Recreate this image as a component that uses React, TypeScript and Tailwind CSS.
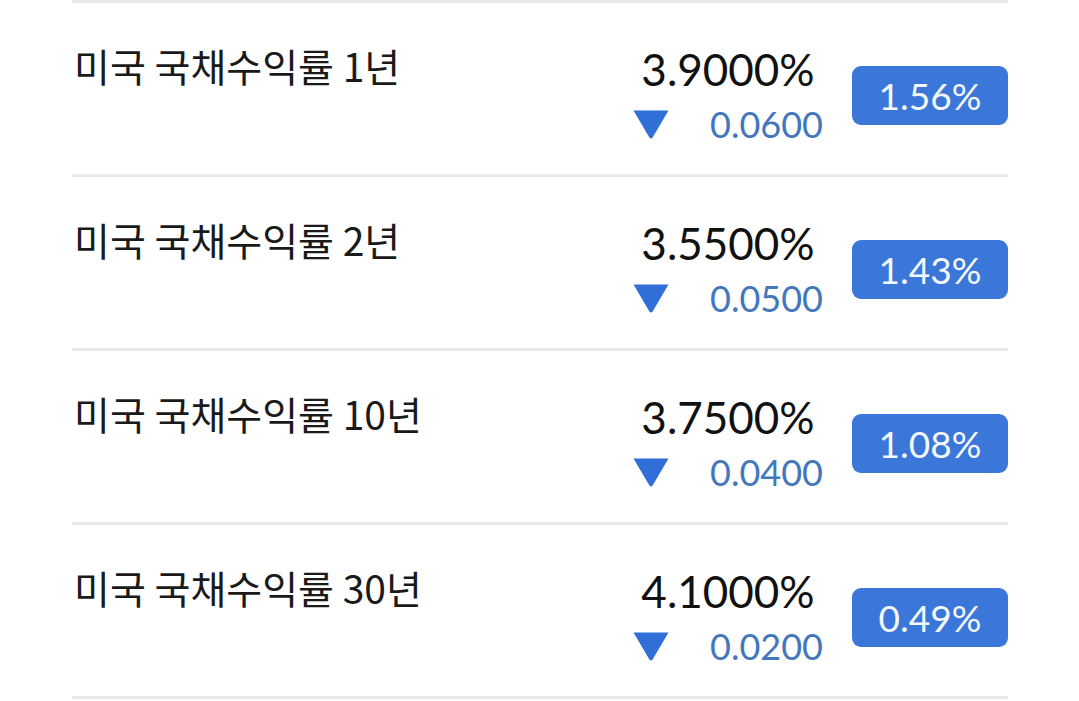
const rows = [
  { term: '1년', rate: '3.9000%', diff: '0.0600', pct: '1.56%' },
  { term: '2년', rate: '3.5500%', diff: '0.0500', pct: '1.43%' },
  { term: '10년', rate: '3.7500%', diff: '0.0400', pct: '1.08%' },
  { term: '30년', rate: '4.1000%', diff: '0.0200', pct: '0.49%' },
];

const DownTriangle = () => (
  <svg width="36" height="29" viewBox="0 0 36 29" className="mt-[4px] shrink-0">
    <path d="M0.5 0.5 H35.5 L19.6 27.6 Q18 29.5 16.4 27.6 Z" fill="#2f6fd7" />
  </svg>
);

const App = () => {
  return (
    <div className="min-h-[701px] w-full bg-white">
      <div className="ml-[72px] w-[936px] border-b-[3px] border-[#e9e9e9]">
        {rows.map((row) => (
          <div
            key={row.term}
            className="flex h-[174px] border-t-[3px] border-[#e9e9e9]"
          >
            <div
              className="flex-1 pt-[38px] pl-[2px] text-[39px] leading-[48px] text-[#1a1a1a]"
              style={{ fontFamily: '"Noto Sans CJK KR", sans-serif' }}
            >
              미국 국채수익률 {row.term}
            </div>
            <div
              className="flex items-start gap-[29px]"
              style={{ fontFamily: 'Lato, sans-serif' }}
            >
              <div className="flex w-[190px] flex-col items-center pt-[44px]">
                <div className="text-[44px] leading-[44px] text-[#111111]">{row.rate}</div>
                <div className="mt-[15px] flex w-full items-start justify-between">
                  <DownTriangle />
                  <span className="text-[36px] leading-[36px] text-[#4377bd]">{row.diff}</span>
                </div>
              </div>
              <div className="mt-[63px] flex h-[59px] w-[156px] items-center justify-center rounded-[9px] bg-[#3a77d8] text-[37px] text-[#f4f8ff]">
                {row.pct}
              </div>
            </div>
          </div>
        ))}
      </div>
    </div>
  );
};

export default App;
